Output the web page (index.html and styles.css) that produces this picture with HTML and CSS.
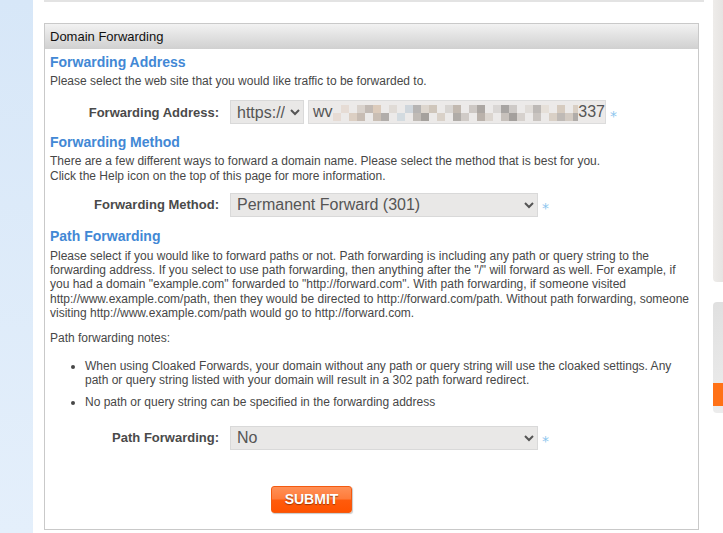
FILE: index.html
```html
<!DOCTYPE html>
<html>
<head>
<meta charset="utf-8">
<title>Domain Forwarding</title>
<link rel="stylesheet" href="styles.css">
</head>
<body>
<div class="page">
  <aside class="sidebar"></aside>
  <main class="main">
    <div class="topline"></div>
    <section class="panel">
      <div class="panel-head">Domain Forwarding</div>
      <div class="panel-body">
        <h2 class="sec-title t1">Forwarding Address</h2>
        <p class="desc d1">Please select the web site that you would like traffic to be forwarded to.</p>
        <div class="form-row r1">
          <label class="label">Forwarding Address:</label>
          <div class="field">
            <select class="sel sel-proto"><option>https://</option></select>
            <div class="addr"><span class="addr-text">wv</span><span class="mosaic"></span><span class="addr-text">337</span></div>
            <span class="req">*</span>
          </div>
        </div>

        <h2 class="sec-title t2">Forwarding Method</h2>
        <p class="desc d2">There are a few different ways to forward a domain name. Please select the method that is best for you.<br>Click the Help icon on the top of this page for more information.</p>
        <div class="form-row r2">
          <label class="label">Forwarding Method:</label>
          <div class="field">
            <select class="sel sel-wide"><option>Permanent Forward (301)</option></select>
            <span class="req">*</span>
          </div>
        </div>

        <h2 class="sec-title t3">Path Forwarding</h2>
        <p class="desc d3">Please select if you would like to forward paths or not. Path forwarding is including any path or query string to the forwarding address. If you select to use path forwarding, then anything after the "/" will forward as well. For example, if you had a domain "example.com" forwarded to "http://forward.com". With path forwarding, if someone visited http://www.example.com/path, then they would be directed to http://forward.com/path. Without path forwarding, someone visiting http://www.example.com/path would go to http://forward.com.</p>
        <p class="desc d4">Path forwarding notes:</p>
        <ul class="notes">
          <li>When using Cloaked Forwards, your domain without any path or query string will use the cloaked settings. Any path or query string listed with your domain will result in a 302 path forward redirect.</li>
          <li>No path or query string can be specified in the forwarding address</li>
        </ul>
        <div class="form-row r3">
          <label class="label">Path Forwarding:</label>
          <div class="field">
            <select class="sel sel-wide"><option>No</option></select>
            <span class="req">*</span>
          </div>
        </div>
        <button class="submit" type="button">SUBMIT</button>
      </div>
    </section>
  </main>
  <aside class="rail">
    <div class="rail-box1"></div>
    <div class="rail-box2"><div class="rail-orange"></div></div>
  </aside>
</div>
</body>
</html>
```
FILE: styles.css
```css
* { box-sizing: border-box; }
html, body { margin: 0; padding: 0; background: #fff; }
body {
  font-family: "Liberation Sans", Arial, sans-serif;
  color: #474747;
}
.page { display: flex; height: 533px; overflow: hidden; }
.sidebar {
  width: 33px; flex: none;
  background: linear-gradient(#d7e7f8, #e4effb);
}
.main { width: 680px; flex: none; padding-left: 11px; }
.topline { width: 660px; height: 2px; background: #e3e3e3; }
.panel {
  margin-top: 21px;
  width: 655px;
  height: 507px;
  border: 1px solid #c9c9c9;
}
.panel-head {
  height: 25px;
  line-height: 25px;
  padding-left: 5px;
  font-size: 13px;
  color: #111;
  background: linear-gradient(#f2f2f2, #d0d0d0);
}
.panel-body { padding: 0 6px 0 5px; }
.sec-title {
  margin: 0;
  font-size: 14px;
  line-height: 16px;
  font-weight: bold;
  color: #4288d5;
}
.t1 { margin-top: 5px; }
.t2 { margin-top: 10px; }
.t3 { margin-top: 11px; }
.desc { margin: 0; font-size: 12px; line-height: 14.3px; color: #474747; }
.d1 { margin-top: 4px; }
.d2 { margin-top: 4px; }
.d3 { margin-top: 5px; }
.d4 { margin-top: 11px; }
.notes {
  margin: 13px 0 0;
  padding-left: 35px;
  font-size: 12px;
  line-height: 14.3px;
}
.notes li { margin-bottom: 8px; }
.notes li:last-child { margin-bottom: 0; }
.form-row {
  display: grid;
  grid-template-columns: 169px auto;
  column-gap: 11px;
  align-items: center;
  height: 24px;
}
.r1 { margin-top: 12px; }
.r2 { margin-top: 10px; }
.r3 { margin-top: 16px; }
.label {
  text-align: right;
  font-size: 13px;
  font-weight: bold;
  color: #4a4a4a;
}
.field { display: flex; align-items: center; gap: 4px; }
.sel {
  height: 24px;
  font-family: "Liberation Sans", Arial, sans-serif;
  font-size: 16px;
  color: #555;
  background-color: #e9e8e7;
  border: 1px solid #d9d9d9;
  border-radius: 0;
  padding: 0 2px;
  outline: none;
}
.sel-proto { width: 74px; }
.sel-wide { width: 308px; }
.addr {
  width: 298px;
  height: 24px;
  display: flex;
  align-items: center;
  padding-left: 4px;
  background: #eceae9;
  border: 1px solid #dcdcdc;
  font-size: 16px;
  color: #555;
  white-space: nowrap;
  overflow: hidden;
}
.mosaic {
  display: inline-block;
  width: 248px;
  height: 16px;
  margin-top: 2px;
  background:
    linear-gradient(to right,
      #eceae9 0 8px, #e6dcd5 8px 16px, #eceae9 16px 24px, #d9d2cc 24px 32px,
      #c2bab4 32px 40px, #dccbbb 40px 48px, #eceae9 48px 56px, #e0dbd6 56px 64px,
      #eceae9 64px 72px, #cfd6dc 72px 80px, #b6b4b3 80px 88px, #ddd6ce 88px 96px,
      #cfc6bb 96px 104px, #eceae9 104px 112px, #d8d5d2 112px 120px, #c2b9b0 120px 128px,
      #eceae9 128px 136px, #cdc8c4 136px 144px, #aca7a3 144px 152px, #eceae9 152px 160px,
      #dad7d5 160px 168px, #a8a5a3 168px 176px, #cecac7 176px 184px, #eceae9 184px 192px,
      #e0dcd8 192px 200px, #bdb9b6 200px 208px, #e6e0d9 208px 216px, #eceae9 216px 224px,
      #d6cbbf 224px 232px, #eceae9 232px 240px, #d9cfc4 240px 248px) top / 100% 8px no-repeat,
    linear-gradient(to right,
      #e6dbd4 0 8px, #eceae9 8px 16px, #dccfc3 16px 24px, #c7bcb3 24px 32px,
      #eceae9 32px 40px, #c9beb4 40px 48px, #b1adaa 48px 56px, #eceae9 56px 64px,
      #d3dbe0 64px 72px, #eceae9 72px 80px, #c0bbb6 80px 88px, #a5a19d 88px 96px,
      #eceae9 96px 104px, #d9d1c8 104px 112px, #eceae9 112px 120px, #b0aca8 120px 128px,
      #d0cbc7 128px 136px, #eceae9 136px 144px, #bab2ab 144px 152px, #dcd6d0 152px 160px,
      #eceae9 160px 168px, #c7c1bc 168px 176px, #a4a09d 176px 184px, #d6d1cd 184px 192px,
      #eceae9 192px 200px, #c9c4c0 200px 208px, #eceae9 208px 216px, #d9d0c6 216px 224px,
      #bfbab6 224px 232px, #d3cbc3 232px 240px, #b0aca9 240px 248px) bottom / 100% 8px no-repeat;
}
.req {
  font-family: "DejaVu Sans", sans-serif;
  font-size: 14px;
  line-height: 14px;
  color: #8cc5ee;
  margin-top: 7px;
}
.submit {
  display: block;
  margin: 36px 0 0 221px;
  width: 81px;
  height: 27px;
  padding: 0;
  border: 1px solid #f35a10;
  border-radius: 3px;
  background: linear-gradient(#ff9056 0%, #ff7b3a 48%, #ff5b0c 52%, #ff5200 100%);
  box-shadow: 1px 1px 1px #c9c9c9;
  font-family: "Liberation Sans", Arial, sans-serif;
  font-size: 14px;
  font-weight: bold;
  color: #fff;
  text-shadow: 0 1px 1px rgba(110, 40, 0, 0.7);
  cursor: pointer;
}
.rail { width: 10px; flex: none; }
.rail-box1 {
  height: 282px;
  background: linear-gradient(to right, #eeecea, #e6e4e2);
  border-bottom-left-radius: 4px;
}
.rail-box2 {
  margin-top: 20px;
  height: 111px;
  padding-top: 81px;
  border-radius: 4px 0 0 4px;
  background: linear-gradient(#e0e0e0, #ececec);
}
.rail-orange { height: 23px; background: #ff7116; }
```
